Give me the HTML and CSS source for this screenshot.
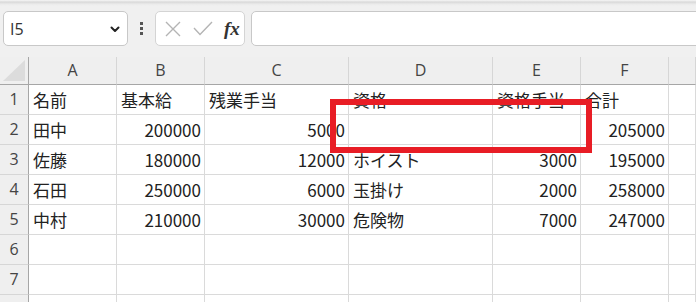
FILE: index.html
```html
<!DOCTYPE html>
<html lang="ja">
<head>
  <meta charset="UTF-8" />
  <title>Book1 - Excel</title>
  <link rel="stylesheet" href="styles.css">
</head>
<body>
  <div class="ribbon-edge"></div>

  <div class="formula-bar">
    <div class="name-box">
      <span>I5</span>
      <svg class="chevron" width="10" height="7" viewBox="0 0 10 7">
        <path d="M1.5 1.5 L5 5 L8.5 1.5" fill="none" stroke="#222" stroke-width="2" stroke-linecap="round" stroke-linejoin="round"/>
      </svg>
    </div>
    <div class="more-dots"><i></i><i></i><i></i></div>
    <div class="fx-box">
      <svg width="16" height="16" viewBox="0 0 16 16">
        <path d="M1 1 L15 15 M15 1 L1 15" stroke="#b4b4b4" stroke-width="1.4"/>
      </svg>
      <svg width="20" height="15" viewBox="0 0 20 15">
        <path d="M1 7 L7 13.5 L19 1" fill="none" stroke="#b4b4b4" stroke-width="1.4"/>
      </svg>
      <span class="fx">fx</span>
    </div>
    <div class="formula-input"></div>
  </div>

  <div class="sheet">
    <div class="grid">
      <div class="corner">
        <svg width="28" height="27" viewBox="0 0 28 27">
          <polygon points="3,24 25,3 25,24" fill="#dcdcdc"/>
        </svg>
      </div>
      <div class="col-head">A</div>
      <div class="col-head">B</div>
      <div class="col-head">C</div>
      <div class="col-head">D</div>
      <div class="col-head">E</div>
      <div class="col-head">F</div>
      <div class="col-head"></div>

      <div class="row-head">1</div>
      <div class="cell">名前</div>
      <div class="cell">基本給</div>
      <div class="cell">残業手当</div>
      <div class="cell">資格</div>
      <div class="cell">資格手当</div>
      <div class="cell">合計</div>
      <div class="cell"></div>

      <div class="row-head">2</div>
      <div class="cell">田中</div>
      <div class="cell num">200000</div>
      <div class="cell num">5000</div>
      <div class="cell"></div>
      <div class="cell"></div>
      <div class="cell num">205000</div>
      <div class="cell"></div>

      <div class="row-head">3</div>
      <div class="cell">佐藤</div>
      <div class="cell num">180000</div>
      <div class="cell num">12000</div>
      <div class="cell">ホイスト</div>
      <div class="cell num">3000</div>
      <div class="cell num">195000</div>
      <div class="cell"></div>

      <div class="row-head">4</div>
      <div class="cell">石田</div>
      <div class="cell num">250000</div>
      <div class="cell num">6000</div>
      <div class="cell">玉掛け</div>
      <div class="cell num">2000</div>
      <div class="cell num">258000</div>
      <div class="cell"></div>

      <div class="row-head">5</div>
      <div class="cell">中村</div>
      <div class="cell num">210000</div>
      <div class="cell num">30000</div>
      <div class="cell">危険物</div>
      <div class="cell num">7000</div>
      <div class="cell num">247000</div>
      <div class="cell"></div>

      <div class="row-head">6</div>
      <div class="cell"></div><div class="cell"></div><div class="cell"></div>
      <div class="cell"></div><div class="cell"></div><div class="cell"></div><div class="cell"></div>

      <div class="row-head">7</div>
      <div class="cell"></div><div class="cell"></div><div class="cell"></div>
      <div class="cell"></div><div class="cell"></div><div class="cell"></div><div class="cell"></div>

      <!-- row 8 only peeks in at the bottom edge -->
      <div class="row-head"></div>
      <div class="cell"></div><div class="cell"></div><div class="cell"></div>
      <div class="cell"></div><div class="cell"></div><div class="cell"></div><div class="cell"></div>
    </div>

    <!-- red annotation box drawn over D2:E2 -->
    <div class="highlight"></div>
  </div>
</body>
</html>
```

FILE: styles.css
```css
* {
  box-sizing: border-box;
}
body {
  margin: 0;
  background: #f0f0f0;
  font-family: "Noto Sans CJK JP", sans-serif;
  color: #222;
  overflow: hidden;
}
.ribbon-edge {
  height: 6px;
  background: linear-gradient(#f7f7f7 0%, #d9d9d9 35%, #ebebeb 70%, #f0f0f0 100%);
}
.formula-bar {
  display: flex;
  align-items: center;
  height: 35px;
  margin-top: 5px;
  padding-left: 3px;
}
.name-box {
  width: 125px;
  height: 35px;
  background: #fff;
  border: 1px solid #c8c8c8;
  border-radius: 5px;
  display: flex;
  align-items: center;
  justify-content: space-between;
  padding: 0 7px 0 6px;
  font-family: "Open Sans", "Noto Sans", sans-serif;
  font-size: 16px;
  color: #333;
}
.chevron {
  margin-top: 2px;
}
.more-dots {
  width: 27px;
  display: flex;
  flex-direction: column;
  align-items: center;
  gap: 2px;
}
.more-dots i {
  width: 3px;
  height: 3px;
  background: #555;
  display: block;
}
.fx-box {
  width: 90px;
  height: 35px;
  background: #fff;
  border: 1px solid #d4d4d4;
  border-radius: 5px;
  display: flex;
  align-items: center;
  padding-left: 9px;
  gap: 12px;
}
.fx {
  font-family: "Liberation Serif", serif;
  font-style: italic;
  font-weight: bold;
  font-size: 19px;
  color: #333;
  margin-left: -1px;
}
.formula-input {
  flex: 1;
  height: 35px;
  margin-left: 6px;
  margin-right: -10px;
  background: #fff;
  border: 1px solid #c8c8c8;
  border-radius: 5px;
}
.sheet {
  position: relative;
  margin-top: 11px;
}
.grid {
  display: grid;
  grid-template-columns: 29px 88px 88px 144px 144px 88px 88px 1fr;
  grid-template-rows: 28px repeat(8, 30px);
  font-size: 17px;
}
.corner {
  background: #efefef;
  border-right: 1px solid #a6a6a6;
  border-bottom: 1px solid #a6a6a6;
}
.corner svg {
  display: block;
}
.col-head {
  background: #efefef;
  border-right: 1px solid #d6d6d6;
  border-bottom: 1px solid #a6a6a6;
  text-align: center;
  font-family: "Open Sans", "Noto Sans", sans-serif;
  font-size: 16px;
  line-height: 27px;
  color: #444;
}
.row-head {
  background: #efefef;
  border-right: 1px solid #a6a6a6;
  border-bottom: 1px solid #d6d6d6;
  text-align: center;
  font-family: "Open Sans", "Noto Sans", sans-serif;
  font-size: 16px;
  line-height: 29px;
  color: #444;
}
.cell {
  background: #fff;
  border-right: 1px solid #dadada;
  border-bottom: 1px solid #dadada;
  padding: 0 4px;
  line-height: 29px;
  white-space: nowrap;
  overflow: hidden;
}
.cell.num {
  text-align: right;
  padding-right: 3px;
}
.highlight {
  position: absolute;
  left: 330px;
  top: 42px;
  width: 262px;
  height: 54px;
  border: 6px solid #e81d25;
}
```
